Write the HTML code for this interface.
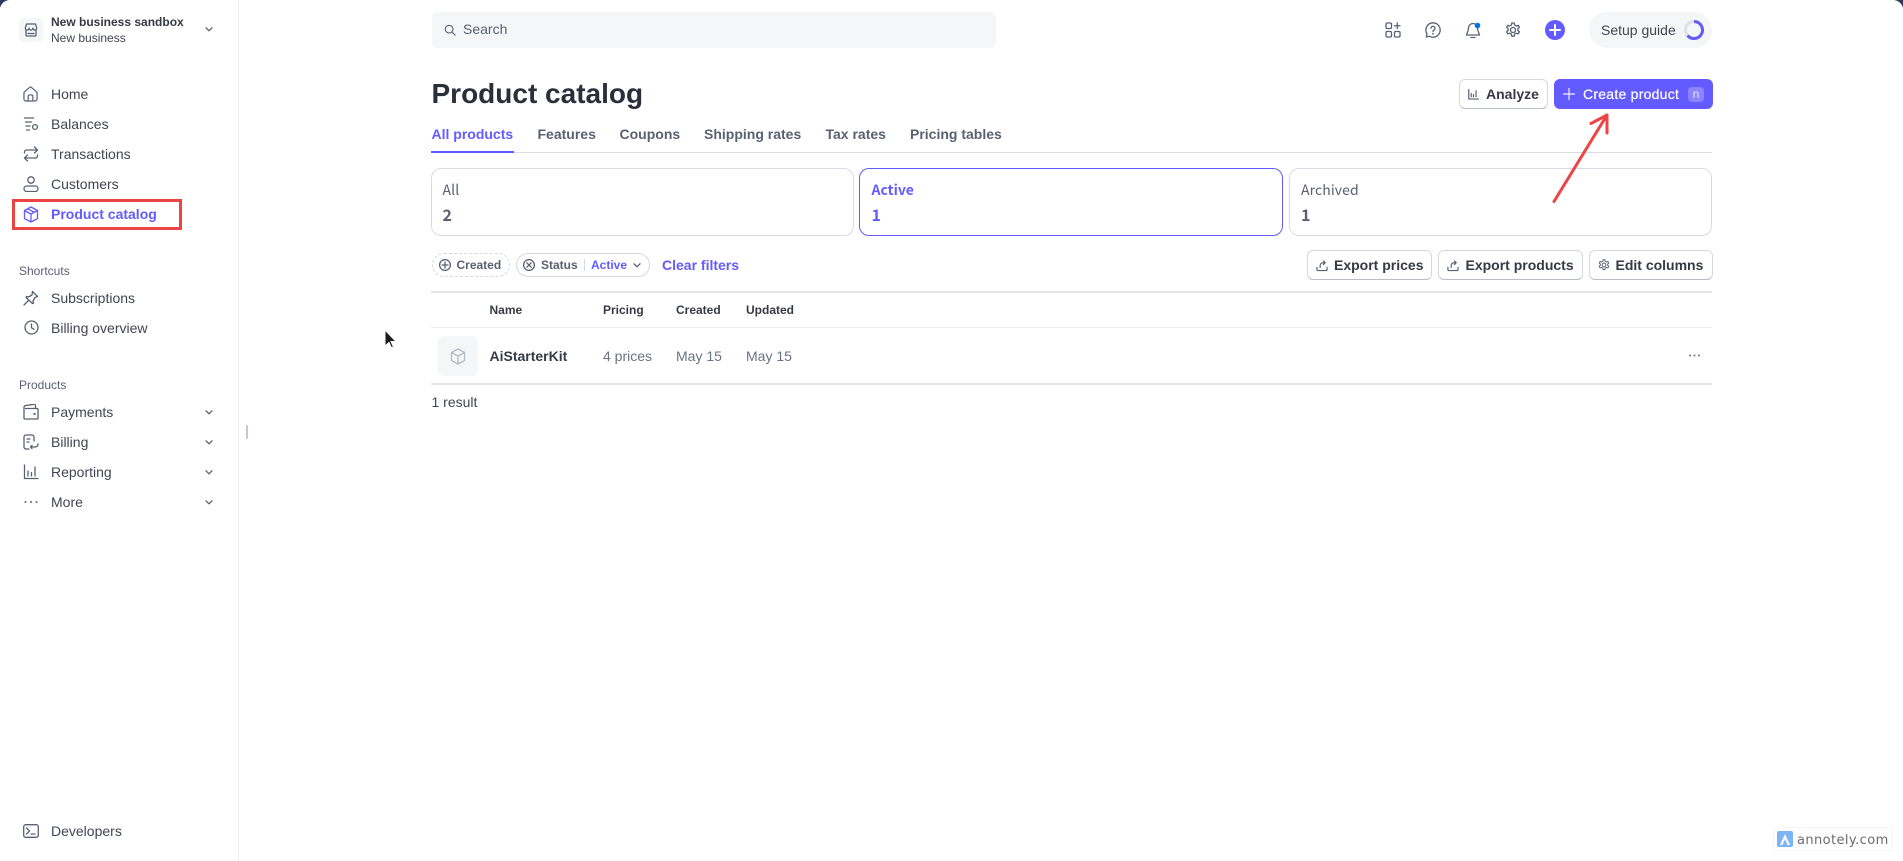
<!DOCTYPE html>
<html lang="en"><head><meta charset="utf-8"><title>Product catalog</title>
<style>
*{box-sizing:border-box}
html,body{margin:0;padding:0;width:1903px;height:861px;overflow:hidden;background:#fff}
body{position:relative;font-family:"Liberation Sans",sans-serif;color:#353a44;font-size:14px}
.t{position:absolute;white-space:nowrap;line-height:20px;height:20px}
.b{font-weight:700}
.nav{color:#414552;left:51px}
.i{position:absolute;fill:none;stroke:#596171;stroke-width:1.3;stroke-linecap:round;stroke-linejoin:round}
.tab{top:124px;font-weight:700;color:#596171}
.card{position:absolute;top:168px;height:68px;border:1px solid #d8dbe3;border-radius:10px;background:#fff}
.cl{font-family:"Noto Sans CJK JP","Liberation Sans",sans-serif;color:#596171;letter-spacing:.1px}
.btn{position:absolute;top:250px;height:30px;border:1px solid #d5d8e0;border-bottom-color:#b9bdc9;border-radius:6px;background:#fff}
.hr{position:absolute;height:1px;left:431px;width:1281px}
.th{top:300px;font-size:12px;font-weight:700;color:#353a44}
.td{top:346px;color:#687385}
</style></head><body>
<!-- corners -->
<svg style="position:absolute;left:0;top:0" width="12" height="12"><path d="M0 0H9Q2 1 0 8Z" fill="#2b3a5e"/></svg>
<svg style="position:absolute;right:0;top:0" width="12" height="12"><path d="M12 0H3Q10 1 12 8Z" fill="#2b3a5e"/></svg>

<!-- sidebar -->
<div style="position:absolute;left:238px;top:0;width:1px;height:861px;background:#ebedf1"></div>
<div style="position:absolute;left:246px;top:425px;width:2px;height:14px;background:#c4c8d0"></div>

<div style="position:absolute;left:19px;top:18px;width:24px;height:24px;border-radius:5px;background:#f5f6f8"></div>
<svg class="i" style="left:24px;top:23px" width="14" height="14" viewBox="0 0 14 14" stroke-width="1.2"><path d="M2.5 1h9l1.2 4a1.9 1.9 0 0 1-3.8.2 1.9 1.9 0 0 1-3.800 0 1.900 1.900 0 0 1-3.800-.2zM2 7v5a1 1 0 0 0 1 1h8a1 1 0 0 0 1-1V7M4 10.500h6"/></svg>
<div class="t b" style="left:51px;top:12px;font-size:12px;color:#353a44">New business sandbox</div>
<div class="t" style="left:51px;top:28px;font-size:12px;color:#414552">New business</div>
<svg class="i" style="left:204px;top:26px" width="10" height="7" viewBox="0 0 10 7"><path d="M2 1.800L5 4.800 8 1.800"/></svg>

<svg class="i" style="left:23px;top:86px" width="15" height="16" viewBox="0 0 16 17"><path d="M1 7.500a2 2 0 0 1 .7-1.500L7 1.500a1.500 1.500 0 0 1 2 0L14.300 6a2 2 0 0 1 .7 1.500V14a2 2 0 0 1-2 2H3a2 2 0 0 1-2-2zM5.500 16v-5a1.500 1.500 0 0 1 1.500-1.500h2a1.500 1.500 0 0 1 1.500 1.500v5"/></svg>
<div class="t nav" style="top:84px">Home</div>
<svg class="i" style="left:23px;top:116px" width="16" height="16" viewBox="0 0 16 16"><path d="M1.500 2h9M2.500 6h6M3 10h4M3.500 14h3"/><circle cx="12" cy="11" r="2.400"/></svg>
<div class="t nav" style="top:114px">Balances</div>
<svg class="i" style="left:23px;top:146px" width="16" height="16" viewBox="0 0 16 16"><path d="M1.500 7V6a2 2 0 0 1 2-2h11M11.500 1l3 3-3 3M14.500 9v1a2 2 0 0 1-2 2h-11M4.500 9l-3 3 3 3"/></svg>
<div class="t nav" style="top:144px">Transactions</div>
<svg class="i" style="left:23px;top:176px" width="16" height="16" viewBox="0 0 16 16"><circle cx="8" cy="4" r="3.200"/><rect x="1" y="10" width="14" height="5.500" rx="2.700"/></svg>
<div class="t nav" style="top:174px">Customers</div>
<svg class="i" style="left:23px;top:206px;stroke:#635bff" width="16" height="17" viewBox="0 0 16 17"><path d="M8 1l6.500 3.500v8L8 16l-6.500-3.500v-8zM1.500 4.500L8 8l6.500-3.500M8 8v8M4.800 2.800l6.500 3.500"/></svg>
<div class="t b" style="left:51px;top:204px;color:#635bff">Product catalog</div>
<div style="position:absolute;left:12px;top:199px;width:170px;height:31px;border:3px solid #ea4543"></div>

<div class="t" style="left:19px;top:261px;font-size:12px;color:#596171">Shortcuts</div>
<svg class="i" style="left:23px;top:290px" width="16" height="16" viewBox="0 0 16 16"><path d="M1 15l4.500-4.500M9.500 1.500l5 5-2.500 1-2 3.500.5 2-1 .5L3 7.500l.5-1 2 .5 3.500-2z"/></svg>
<div class="t nav" style="top:288px">Subscriptions</div>
<svg class="i" style="left:24px;top:320px" width="15" height="15" viewBox="0 0 15 15"><circle cx="7.500" cy="7.500" r="6.500"/><path d="M7.500 4v3.800l2.500 1.500"/></svg>
<div class="t nav" style="top:318px">Billing overview</div>

<div class="t" style="left:19px;top:375px;font-size:12px;color:#596171">Products</div>
<svg class="i" style="left:23px;top:404px" width="16" height="16" viewBox="0 0 16 16"><path d="M1 5.500V3.500a2 2 0 0 1 1.700-2l8-1.200A1.500 1.500 0 0 1 12.500 2v2.500M2.500 4.500H14a1 1 0 0 1 1 1V14a1 1 0 0 1-1 1H2a1 1 0 0 1-1-1V5.500"/><circle cx="11.500" cy="10" r=".5"/></svg>
<div class="t nav" style="top:402px">Payments</div>
<svg class="i" style="left:23px;top:434px" width="16" height="16" viewBox="0 0 16 16"><path d="M6 15H3a2 2 0 0 1-2-2V3a2 2 0 0 1 2-2h6a2 2 0 0 1 2 2v4M4 5h3M4 8h2M9 11.500l-1.500 1.500L9 14.500M8 13h4a3 3 0 0 0 3-3"/></svg>
<div class="t nav" style="top:432px">Billing</div>
<svg class="i" style="left:23px;top:464px" width="16" height="16" viewBox="0 0 16 16"><path d="M1.500 1v13.500h13.500M5 7v5M8.500 8.500V12M12 3v9"/></svg>
<div class="t nav" style="top:462px">Reporting</div>
<svg class="i" style="left:23px;top:494px" width="16" height="16" viewBox="0 0 16 16"><circle cx="2.500" cy="8" r=".4"/><circle cx="8" cy="8" r=".4"/><circle cx="13.500" cy="8" r=".4"/></svg>
<div class="t nav" style="top:492px">More</div>
<svg class="i" style="left:204px;top:409px" width="10" height="7" viewBox="0 0 10 7"><path d="M2 1.800L5 4.800 8 1.800"/></svg>
<svg class="i" style="left:204px;top:439px" width="10" height="7" viewBox="0 0 10 7"><path d="M2 1.800L5 4.800 8 1.800"/></svg>
<svg class="i" style="left:204px;top:469px" width="10" height="7" viewBox="0 0 10 7"><path d="M2 1.800L5 4.800 8 1.800"/></svg>
<svg class="i" style="left:204px;top:499px" width="10" height="7" viewBox="0 0 10 7"><path d="M2 1.800L5 4.800 8 1.800"/></svg>

<svg class="i" style="left:23px;top:824px" width="16" height="14" viewBox="0 0 16 14"><rect x=".7" y=".7" width="14.600" height="12.600" rx="2"/><path d="M3.500 4l3 3-3 3M8 10h4"/></svg>
<div class="t nav" style="top:821px">Developers</div>

<!-- top bar -->
<div style="position:absolute;left:432px;top:12px;width:564px;height:36px;background:#f5f6f8;border-radius:6px"></div>
<svg class="i" style="left:444px;top:24px" width="12" height="12" viewBox="0 0 14 14"><circle cx="6" cy="6" r="4.500"/><path d="M9.500 9.500L13 13"/></svg>
<div class="t" style="left:463px;top:19px;color:#596171">Search</div>

<svg class="i" style="left:1385px;top:22px" width="16" height="16" viewBox="0 0 16 16"><rect x="1" y="1" width="5.500" height="5.500" rx="1.200"/><rect x="1" y="9.500" width="5.500" height="5.500" rx="1.200"/><rect x="9.500" y="9.500" width="5.500" height="5.500" rx="1.200"/><path d="M12.250 1v5.500M9.500 3.750h5.500"/></svg>
<svg class="i" style="left:1425px;top:22px" width="16" height="16" viewBox="0 0 16 16"><path d="M8 .8a7.200 7.200 0 1 1-3.500 13.500L1.200 15l.8-3.200A7.200 7.200 0 0 1 8 .8z"/><path d="M6 6.200a2 2 0 1 1 3 1.800c-.7.400-1 .8-1 1.500"/><circle cx="8" cy="11.700" r=".3"/></svg>
<svg class="i" style="left:1465px;top:22px" width="17" height="17" viewBox="0 0 17 17"><path d="M8 1.500a4.500 4.500 0 0 0-4.500 4.500c0 4-2 5.500-2 7h13c0-1.500-2-3-2-7A4.500 4.500 0 0 0 8 1.500zM6 15.500h4"/><circle cx="12.500" cy="3.500" r="2.800" fill="#0073e6" stroke="#fff" stroke-width="0"/></svg>
<svg class="i" style="left:1505px;top:22px" width="16" height="16" viewBox="0 0 16 16"><circle cx="8" cy="8" r="2.500"/><path d="M6.800 1h2.400l.4 2 1.700 1 1.900-.7 1.200 2-1.500 1.400v1.800l1.500 1.300-1.200 2.100-1.900-.7-1.700 1-.4 2H6.800l-.4-2-1.700-1-1.900.7-1.200-2.100 1.500-1.300V6.700L1.600 5.300l1.200-2 1.900.7 1.700-1z"/></svg>
<svg style="position:absolute;left:1545px;top:20px" width="20" height="20" viewBox="0 0 20 20"><circle cx="10" cy="10" r="10" fill="#635bff"/><path d="M10 5v10M5 10h10" stroke="#fff" stroke-width="2" stroke-linecap="round"/></svg>
<div style="position:absolute;left:1589px;top:12px;width:123px;height:36px;border-radius:18px;background:#f5f6f8"></div>
<div class="t" style="left:1601px;top:19.500px;color:#414552">Setup guide</div>
<svg style="position:absolute;left:1684px;top:20px" width="20" height="20" viewBox="0 0 20 20"><circle cx="10" cy="10" r="8.500" fill="none" stroke="#dfe1e8" stroke-width="3"/><path d="M10 1.500a8.500 8.500 0 1 1-6.500 14" fill="none" stroke="#635bff" stroke-width="3"/></svg>

<!-- title -->
<div class="t" style="left:431.500px;top:77px;height:34px;line-height:34px;font-size:28px;font-weight:700;color:#2a2f3a">Product catalog</div>

<div style="position:absolute;left:1459px;top:79px;width:89px;height:30px;border:1px solid #d5d8e0;border-bottom-color:#b9bdc9;border-radius:6px;background:#fff"></div>
<svg class="i" style="left:1468px;top:89px" width="11" height="11" viewBox="0 0 12 12" stroke-width="1.100"><path d="M.8.500v10.500h10.700M3.500 5v3.500M6 6v2.500M8.800 2v6.500"/></svg>
<div class="t b" style="left:1486px;top:84px;color:#353a44">Analyze</div>
<div style="position:absolute;left:1554px;top:79px;width:159px;height:30px;border-radius:6px;background:#635bff"></div>
<svg style="position:absolute;left:1563px;top:88px" width="12" height="12" viewBox="0 0 12 12"><path d="M6 .5v11M.5 6h11" stroke="#fff" stroke-width="1.200" stroke-linecap="round" opacity=".9"/></svg>
<div class="t" style="left:1583px;top:84px;color:#fff;font-weight:400;letter-spacing:.25px;-webkit-text-stroke:.2px #fff">Create product</div>
<div style="position:absolute;left:1688px;top:87px;width:16px;height:15px;border-radius:4px;background:#8a84ff;color:#eceaff;font-size:12px;line-height:15px;text-align:center">n</div>

<!-- tabs -->
<div class="t tab" style="left:431.500px;color:#635bff">All products</div>
<div class="t tab" style="left:537.500px">Features</div>
<div class="t tab" style="left:619.500px">Coupons</div>
<div class="t tab" style="left:704px">Shipping rates</div>
<div class="t tab" style="left:825.500px">Tax rates</div>
<div class="t tab" style="left:910px">Pricing tables</div>
<div style="position:absolute;left:431px;top:152px;width:1281px;height:1px;background:#d8dbe3"></div>
<div style="position:absolute;left:431px;top:151px;width:83px;height:2px;background:#635bff"></div>

<!-- status cards -->
<div class="card" style="left:431px;width:423px"></div>
<div class="t cl" style="left:442.500px;top:180px">All</div>
<div class="t cl" style="left:442.500px;top:203.500px;font-size:16px;font-weight:700">2</div>
<div class="card" style="left:859px;width:424px;border:1.500px solid #635bff"></div>
<div class="t cl" style="left:871.500px;top:180px;color:#635bff;font-weight:700;letter-spacing:0">Active</div>
<div class="t cl" style="left:871.500px;top:203.500px;color:#635bff;font-size:16px;font-weight:700">1</div>
<div class="card" style="left:1289px;width:423px"></div>
<div class="t cl" style="left:1301px;top:180px">Archived</div>
<div class="t cl" style="left:1301px;top:203.500px;font-size:16px;font-weight:700">1</div>

<!-- filters -->
<div style="position:absolute;left:432px;top:253px;width:78px;height:24px;border:1px dashed #d5d8e0;border-radius:12px"></div>
<svg class="i" style="left:439px;top:259px" width="12" height="12" viewBox="0 0 12 12" stroke-width="1"><circle cx="6" cy="6" r="5.400"/><path d="M6 3v6M3 6h6"/></svg>
<div class="t b" style="left:456.500px;top:255px;font-size:12px;color:#596171">Created</div>
<div style="position:absolute;left:516px;top:253px;width:134px;height:24px;border:1px solid #d5d8e0;border-radius:12px"></div>
<svg class="i" style="left:523px;top:259px" width="12" height="12" viewBox="0 0 12 12" stroke-width="1"><circle cx="6" cy="6" r="5.400"/><path d="M3.800 3.800l4.400 4.400M8.200 3.800L3.800 8.200"/></svg>
<div class="t b" style="left:541px;top:255px;font-size:12px;color:#596171">Status</div>
<div style="position:absolute;left:584px;top:259px;width:1px;height:12px;background:#d5d8e0"></div>
<div class="t b" style="left:591px;top:255px;font-size:12px;color:#635bff">Active</div>
<svg class="i" style="left:632px;top:262px" width="10" height="7" viewBox="0 0 10 7" stroke-width="1.200"><path d="M2 1.800L5 4.800 8 1.800"/></svg>
<div class="t b" style="left:662px;top:255px;color:#635bff">Clear filters</div>

<div class="btn" style="left:1307px;width:125px"></div>
<svg class="i" style="left:1316px;top:259px" width="12" height="13" viewBox="0 0 13 14" stroke-width="1"><path d="M1 9v2.500a1 1 0 0 0 1 1h9a1 1 0 0 0 1-1V9M4.500 9V7a3 3 0 0 1 3-3h2M8 2l2 2-2 2"/></svg>
<div class="t b" style="left:1334px;top:255px">Export prices</div>
<div class="btn" style="left:1438px;width:144.500px"></div>
<svg class="i" style="left:1447px;top:259px" width="12" height="13" viewBox="0 0 13 14" stroke-width="1"><path d="M1 9v2.500a1 1 0 0 0 1 1h9a1 1 0 0 0 1-1V9M4.500 9V7a3 3 0 0 1 3-3h2M8 2l2 2-2 2"/></svg>
<div class="t b" style="left:1465.500px;top:255px">Export products</div>
<div class="btn" style="left:1589px;width:124px"></div>
<svg class="i" style="left:1598px;top:259px" width="12" height="12" viewBox="0 0 16 16" stroke-width="1.800"><circle cx="8" cy="8" r="2.500"/><path d="M6.800 1h2.400l.4 2 1.700 1 1.900-.7 1.200 2-1.500 1.400v1.800l1.500 1.300-1.200 2.100-1.900-.7-1.700 1-.4 2H6.800l-.4-2-1.700-1-1.900.7-1.200-2.100 1.500-1.300V6.700L1.600 5.300l1.200-2 1.900.7 1.700-1z"/></svg>
<div class="t b" style="left:1615.500px;top:255px">Edit columns</div>

<!-- table -->
<div class="hr" style="top:291px;height:2px;background:#e3e5ea"></div>
<div class="t th" style="left:489.500px">Name</div>
<div class="t th" style="left:603px">Pricing</div>
<div class="t th" style="left:676px">Created</div>
<div class="t th" style="left:746px">Updated</div>
<div class="hr" style="top:327px;background:#ebedf1"></div>
<div style="position:absolute;left:438px;top:336px;width:40px;height:40px;border-radius:6px;background:#f5f6f8"></div>
<svg class="i" style="left:450px;top:348px;stroke:#b6bac4" width="16" height="17" viewBox="0 0 16 17"><path d="M8 1l6.500 3.500v8L8 16l-6.500-3.500v-8zM1.500 4.500L8 8l6.500-3.500M8 8v8"/></svg>
<div class="t b td" style="left:489.500px;color:#353a44">AiStarterKit</div>
<div class="t td" style="left:603px">4 prices</div>
<div class="t td" style="left:676px">May 15</div>
<div class="t td" style="left:746px">May 15</div>
<svg style="position:absolute;left:1688px;top:353px" width="13" height="5" fill="#687385"><circle cx="2" cy="2.500" r="1"/><circle cx="6.500" cy="2.500" r="1"/><circle cx="11" cy="2.500" r="1"/></svg>
<div class="hr" style="top:383px;height:1.500px;background:#e3e5ea"></div>
<div class="t" style="left:431.500px;top:392px;color:#414552">1 result</div>

<!-- arrow annotation -->
<svg style="position:absolute;left:1540px;top:105px" width="80" height="110" fill="none" stroke="#ef4444" stroke-width="3" stroke-linecap="round" stroke-linejoin="round"><path d="M14 96.500L67 10M51 18.500L67 10 67 28"/></svg>

<!-- cursor -->
<svg style="position:absolute;left:381px;top:327px" width="16" height="26" viewBox="0 0 16 26"><path d="M4 3v16l4-3.500 2.500 5.500 2-1-2.500-5.500h5z" fill="#1b1b22" stroke="#fff" stroke-width="1"/></svg>

<!-- watermark -->
<div style="position:absolute;left:1773px;top:827px;width:120px;height:24px;background:#fff;border:1px solid #f5f5f7;border-radius:2px"></div>
<svg style="position:absolute;left:1777px;top:831px" width="16" height="16" viewBox="0 0 16 16"><rect width="16" height="16" rx="2" fill="#7db4f5"/><path d="M3 14L8 3l5 11h-2.500L8 8l-2.500 6z" fill="#fff"/><path d="M6.500 11h3" stroke="#7db4f5" stroke-width="1"/></svg>
<div class="t" style="left:1797px;top:830.500px;font-family:'DejaVu Sans',sans-serif;font-size:13px;color:#6b6b73;letter-spacing:.4px">annotely.com</div>
</body></html>
